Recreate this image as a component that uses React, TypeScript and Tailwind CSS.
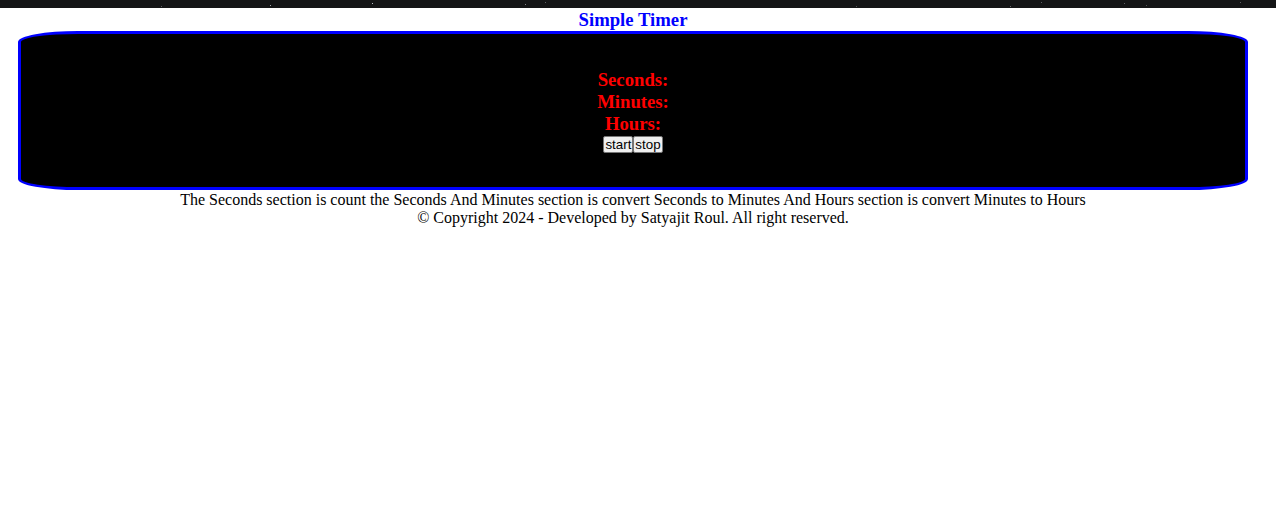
import React from "react";

const stars: [number, number, number][] = [
  [161, 6, 0.35], [270, 5, 0.7], [372, 3, 0.8], [525, 4, 0.5], [545, 2, 0.35], [856, 6, 0.3],
  [1010, 6, 0.4], [1041, 2, 0.35], [1124, 3, 0.35], [1146, 5, 0.3], [1240, 2, 0.35],
];

export default function App() {
  return (
    <div className="min-h-[518px] bg-white" style={{ fontFamily: '"Liberation Serif", "Times New Roman", serif' }}>
      <div className="relative h-[8px] bg-[#141516] overflow-hidden">
        <svg width="1276" height="8" className="absolute left-0 top-0">
          {stars.map(([x, y, o], i) => (
            <rect key={i} x={x} y={y} width="1" height="1" fill="#e5eaf0" opacity={o} />
          ))}
        </svg>
      </div>
      <div className="w-[1266px]">
        <h3 className="h-[23px] text-center text-[18.72px] leading-[23px] font-bold text-[#0000ff]">Simple Timer</h3>
        <div className="mx-[18px] bg-black border-[3px] border-[#0000ff] rounded-[60px/11px] pt-[35px] pb-[34px] flex flex-col items-center">
          <div className="text-[18.72px] leading-[22px] font-bold text-[#ff0000]">Seconds:</div>
          <div className="text-[18.72px] leading-[22px] font-bold text-[#ff0000]">Minutes:</div>
          <div className="text-[18.72px] leading-[22px] font-bold text-[#ff0000]">Hours:</div>
          <div className="flex mt-[1px]">
            <button
              className="h-[17px] px-[1px] bg-[#efefef] border border-[#767676] rounded-[2px] text-[13.33px] leading-[15px] text-black"
              style={{ fontFamily: '"Liberation Sans", Arial, sans-serif' }}
            >
              start
            </button>
            <button
              className="h-[17px] px-[1px] bg-[#efefef] border border-[#767676] rounded-[2px] text-[13.33px] leading-[15px] text-black"
              style={{ fontFamily: '"Liberation Sans", Arial, sans-serif' }}
            >
              stop
            </button>
          </div>
        </div>
        <div className="text-center text-[16px] leading-[18px] text-black mt-[1px]">
          The Seconds section is count the Seconds And Minutes section is convert Seconds to Minutes And Hours section is convert Minutes to Hours
        </div>
        <div className="text-center text-[16px] leading-[18px] text-black">
          © Copyright 2024 - Developed by Satyajit Roul. All right reserved.
        </div>
      </div>
    </div>
  );
}
